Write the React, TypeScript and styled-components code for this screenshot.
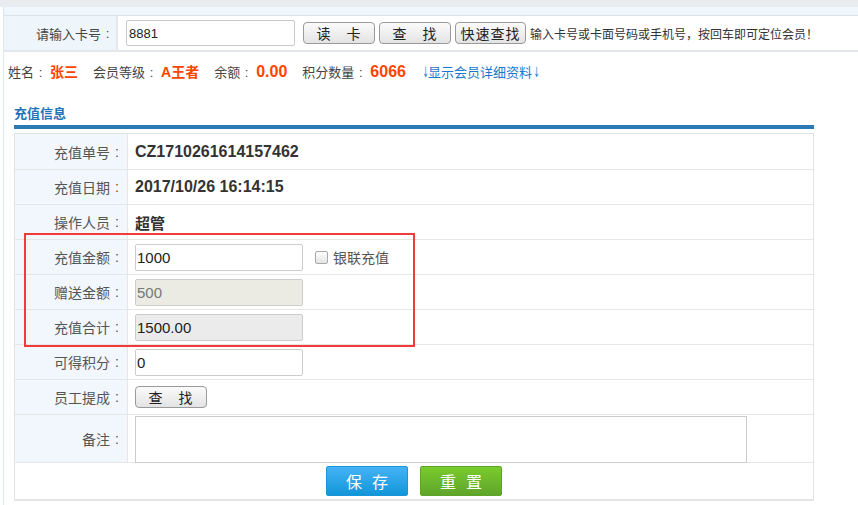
import React from "react";
import styled, { createGlobalStyle } from "styled-components";

const GlobalStyle = createGlobalStyle`
  html, body {
    margin: 0;
    padding: 0;
    background: #fff;
    font-family: "Liberation Sans", "Noto Sans CJK SC", sans-serif;
    color: #333;
  }
`;

const TopStrip = styled.div`
  height: 7px;
  background: #e9ecef;
`;

const Page = styled.div`
  margin-left: 3px;
  border-left: 1px solid #dbe8f4;
  padding-top: 8px;
  background: linear-gradient(#eef7fd, #eef7fd) top / 100% 8px no-repeat, #fff;
  min-height: 498px;
`;

const SearchBar = styled.div`
  display: flex;
  align-items: stretch;
  height: 34px;
  border-top: 1px solid #dde2e6;
  border-bottom: 2px solid #e3e6ea;
`;

const SearchLabel = styled.div`
  width: 110px;
  padding-right: 2px;
  background: #eef6fc;
  border-right: 2px solid #e4e8eb;
  display: flex;
  align-items: center;
  justify-content: flex-end;
  font-family: "Noto Sans CJK SC", sans-serif;
  font-size: 13px;
  color: #444;
`;

const Colon = styled.span`
  display: inline-block;
  width: 1em;
  text-align: center;
  font-family: "Liberation Sans", sans-serif;
`;

const SearchBody = styled.div`
  display: flex;
  align-items: center;
  padding-left: 8px;
  gap: 4px;
`;

const CardInput = styled.input`
  width: 169px;
  height: 26px;
  box-sizing: border-box;
  margin-right: 4px;
  border: 1px solid #c8c8c8;
  border-radius: 2px;
  padding: 0 2px;
  font-size: 13px;
  font-family: "Liberation Sans", sans-serif;
  color: #222;
`;

const GrayButton = styled.button<{ $w: number }>`
  width: ${(p) => p.$w}px;
  height: 22px;
  box-sizing: border-box;
  border: 1px solid #9a9a9a;
  border-radius: 4px;
  background: linear-gradient(#fbfbfb, #e3e3e3);
  font-family: "Noto Sans CJK SC", sans-serif;
  font-size: 14px;
  line-height: 20px;
  color: #222;
  padding: 0;
  letter-spacing: 1px;
  cursor: pointer;
`;

const Hint = styled.span`
  font-family: "Noto Sans CJK SC", sans-serif;
  font-size: 12px;
  color: #333;
  white-space: nowrap;
`;

const MemberLine = styled.div`
  display: flex;
  align-items: baseline;
  gap: 15px;
  height: 40px;
  padding: 0 0 0 4px;
  line-height: 40px;
  font-family: "Noto Sans CJK SC", sans-serif;
  font-size: 13px;
  color: #444;
`;

const Field = styled.span``;

const Red = styled.b<{ $num?: boolean }>`
  color: #ff4500;
  margin-left: 3px;
  font-size: ${(p) => (p.$num ? 16 : 14)}px;
  font-family: "Liberation Sans", "Noto Sans CJK SC", sans-serif;
`;

const DetailLink = styled.a`
  color: #1a78d0;
  text-decoration: none;
  font-size: 13px;
`;

const Arrow = styled.span`
  display: inline-block;
  width: 7px;
  text-align: center;
  font-family: "DejaVu Sans", sans-serif;
  font-size: 14px;
  transform: scaleX(0.5);
`;

const Section = styled.div`
  margin: 0 44px 0 10px;
  padding-top: 9px;
`;

const SectionTitle = styled.div`
  font-family: "Noto Sans CJK SC", sans-serif;
  font-weight: bold;
  font-size: 13px;
  color: #1f75b8;
  height: 24px;
  line-height: 24px;
  border-bottom: 4px solid #2a7ab8;
  margin-bottom: 4px;
`;

const Table = styled.div`
  position: relative;
  border: 1px solid #e3e3e3;
  border-bottom-width: 2px;
`;

const Row = styled.div<{ $h: number }>`
  display: flex;
  height: ${(p) => p.$h}px;
  border-top: 1px solid #e6e6e6;
  &:first-child {
    border-top: none;
  }
`;

const Label = styled.div`
  width: 109px;
  flex: none;
  padding-right: 3px;
  background: #f1f7fd;
  border-right: 1px solid #e6e6e6;
  display: flex;
  align-items: center;
  justify-content: flex-end;
  font-family: "Noto Sans CJK SC", sans-serif;
  font-size: 14px;
  color: #555;
`;

const Cell = styled.div<{ $center?: boolean; $top?: boolean }>`
  flex: 1;
  display: flex;
  align-items: ${(p) => (p.$top ? "flex-start" : "center")};
  justify-content: ${(p) => (p.$center ? "center" : "flex-start")};
  padding-left: ${(p) => (p.$center ? 0 : 7)}px;
  gap: 12px;
`;

const Value = styled.span<{ $cjk?: boolean }>`
  font-family: "Liberation Sans", "Noto Sans CJK SC", sans-serif;
  font-weight: bold;
  font-size: ${(p) => (p.$cjk ? 15 : 16)}px;
  color: #333;
`;

const TextInput = styled.input<{ $bg?: string; $fg?: string }>`
  width: 168px;
  height: 27px;
  box-sizing: border-box;
  border: 1px solid #cccccc;
  border-radius: 2px;
  padding: 0 1px;
  background: ${(p) => p.$bg || "#fff"};
  color: ${(p) => p.$fg || "#222"};
  font-family: "Liberation Sans", sans-serif;
  font-size: 15px;
`;

const CheckLabel = styled.label`
  display: flex;
  align-items: center;
  gap: 5px;
  font-family: "Noto Sans CJK SC", sans-serif;
  font-size: 14px;
  color: #555;
`;

const Box = styled.span`
  width: 11px;
  height: 11px;
  border: 1px solid #a9a9a9;
  border-radius: 2px;
  background: linear-gradient(#fdfdfd, #e4e4e4);
`;

const Memo = styled.textarea`
  width: 612px;
  height: 47px;
  box-sizing: border-box;
  border: 1px solid #cccccc;
  resize: none;
  margin-top: 1px;
`;

const ActionButton = styled.button<{ $kind: "blue" | "green" }>`
  width: 82px;
  height: 30px;
  border: 1px solid ${(p) => (p.$kind === "blue" ? "#1b95d6" : "#5ea42b")};
  border-radius: 2px;
  background: ${(p) =>
    p.$kind === "blue"
      ? "linear-gradient(#45b3f6, #1296d9)"
      : "linear-gradient(#79cb2d, #60a52c)"};
  color: #fff;
  font-family: "Noto Sans CJK SC", sans-serif;
  font-size: 16px;
  letter-spacing: 10px;
  text-indent: 10px;
  padding: 0;
`;

const Highlight = styled.div`
  position: absolute;
  left: 9px;
  top: 99px;
  width: 387px;
  height: 110px;
  border: 2px solid #f23a3a;
  pointer-events: none;
`;

const L = ({ children }: { children: string }) => (
  <Label>
    {children}
    <Colon>:</Colon>
  </Label>
);

export default function App() {
  return (
    <>
      <GlobalStyle />
      <TopStrip />
      <Page>
        <SearchBar>
          <SearchLabel>
            请输入卡号<Colon>:</Colon>
          </SearchLabel>
          <SearchBody>
            <CardInput defaultValue="8881" />
            <GrayButton $w={72}>读　卡</GrayButton>
            <GrayButton $w={72}>查　找</GrayButton>
            <GrayButton $w={71}>快速查找</GrayButton>
            <Hint>输入卡号或卡面号码或手机号，按回车即可定位会员！</Hint>
          </SearchBody>
        </SearchBar>

        <MemberLine>
          <Field>
            姓名<Colon>:</Colon>
            <Red>张三</Red>
          </Field>
          <Field>
            会员等级<Colon>:</Colon>
            <Red>A王者</Red>
          </Field>
          <Field>
            余额<Colon>:</Colon>
            <Red $num>0.00</Red>
          </Field>
          <Field>
            积分数量<Colon>:</Colon>
            <Red $num>6066</Red>
          </Field>
          <DetailLink href="#">
            <Arrow>↓</Arrow>显示会员详细资料<Arrow>↓</Arrow>
          </DetailLink>
        </MemberLine>

        <Section>
          <SectionTitle>充值信息</SectionTitle>
          <Table>
            <Row $h={35}>
              <L>充值单号</L>
              <Cell>
                <Value>CZ1710261614157462</Value>
              </Cell>
            </Row>
            <Row $h={34}>
              <L>充值日期</L>
              <Cell>
                <Value>2017/10/26 16:14:15</Value>
              </Cell>
            </Row>
            <Row $h={34}>
              <L>操作人员</L>
              <Cell>
                <Value $cjk>超管</Value>
              </Cell>
            </Row>
            <Row $h={34}>
              <L>充值金额</L>
              <Cell>
                <TextInput defaultValue="1000" />
                <CheckLabel>
                  <Box />
                  银联充值
                </CheckLabel>
              </Cell>
            </Row>
            <Row $h={34}>
              <L>赠送金额</L>
              <Cell>
                <TextInput $bg="#ebebe4" $fg="#777" defaultValue="500" readOnly />
              </Cell>
            </Row>
            <Row $h={34}>
              <L>充值合计</L>
              <Cell>
                <TextInput $bg="#ebebeb" defaultValue="1500.00" readOnly />
              </Cell>
            </Row>
            <Row $h={34}>
              <L>可得积分</L>
              <Cell>
                <TextInput defaultValue="0" />
              </Cell>
            </Row>
            <Row $h={34}>
              <L>员工提成</L>
              <Cell>
                <GrayButton $w={72}>查　找</GrayButton>
              </Cell>
            </Row>
            <Row $h={47}>
              <L>备注</L>
              <Cell $top>
                <Memo />
              </Cell>
            </Row>
            <Row $h={36}>
              <Cell $center>
                <ActionButton $kind="blue">保存</ActionButton>
                <ActionButton $kind="green">重置</ActionButton>
              </Cell>
            </Row>
            <Highlight />
          </Table>
        </Section>
      </Page>
    </>
  );
}
